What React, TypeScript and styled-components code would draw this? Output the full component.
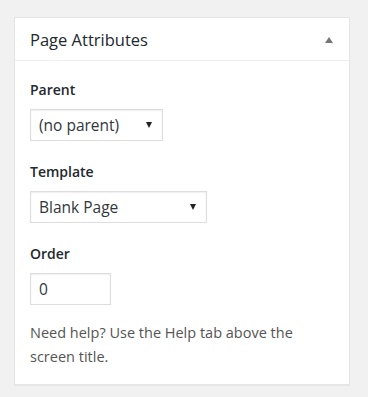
import React from 'react';
import styled, {createGlobalStyle} from 'styled-components';

const GlobalStyle = createGlobalStyle`
  html, body {
    margin: 0;
    padding: 0;
    background: #f1f1f1;
  }
  body {
    font-family: "Open Sans", "Noto Sans", sans-serif;
    color: #444;
  }
`;

const Page = styled.div`
  width: 368px;
  height: 397px;
  padding: 17px 18px 0 14px;
  box-sizing: border-box;
`;

const Postbox = styled.div`
  background: #fff;
  border: 1px solid #e5e5e5;
  box-shadow: 0 1px 1px rgba(0, 0, 0, 0.04);
  height: 368px;
  box-sizing: border-box;
`;

const Header = styled.div`
  display: flex;
  align-items: center;
  justify-content: space-between;
  height: 42px;
  padding: 0 16px 0 15px;
  border-bottom: 1px solid #eee;
`;

const Title = styled.h2`
  margin: 0;
  font-size: 16.5px;
  font-weight: 400;
  color: #23282d;
`;

const Toggle = styled.span`
  width: 0;
  height: 0;
  margin-top: 1px;
  border-left: 4.5px solid transparent;
  border-right: 4.5px solid transparent;
  border-bottom: 6px solid #72777c;
`;

const Body = styled.div`
  padding: 19px 15px 0 15px;
`;

const Group = styled.div<{$last?: boolean}>`
  margin-bottom: ${p => (p.$last ? 16 : 21)}px;
`;

const Label = styled.div`
  font-size: 14px;
  font-weight: 600;
  color: #23282d;
  line-height: 20px;
  margin-bottom: 9px;
`;

const Field = styled.div<{$w: number}>`
  display: flex;
  align-items: center;
  justify-content: space-between;
  width: ${p => p.$w}px;
  height: 32px;
  box-sizing: border-box;
  border: 1px solid #ddd;
  box-shadow: inset 0 1px 2px rgba(0, 0, 0, 0.07);
  padding: 0 10px 0 8px;
  font-size: 15.5px;
  color: #32373c;
`;

const Arrow = styled.span`
  width: 0;
  height: 0;
  border-left: 3px solid transparent;
  border-right: 3px solid transparent;
  border-top: 6px solid #222;
`;

const Help = styled.p`
  margin: 0;
  font-size: 14.5px;
  line-height: 24px;
  color: #555;
`;

export default function App() {
  return (
    <Page>
      <GlobalStyle/>
      <Postbox>
        <Header>
          <Title>Page Attributes</Title>
          <Toggle/>
        </Header>
        <Body>
          <Group>
            <Label>Parent</Label>
            <Field $w={133}>(no parent)<Arrow/></Field>
          </Group>
          <Group>
            <Label>Template</Label>
            <Field $w={177}>Blank Page<Arrow/></Field>
          </Group>
          <Group $last>
            <Label>Order</Label>
            <Field $w={81}>0</Field>
          </Group>
          <Help>Need help? Use the Help tab above the screen title.</Help>
        </Body>
      </Postbox>
    </Page>
  );
}
